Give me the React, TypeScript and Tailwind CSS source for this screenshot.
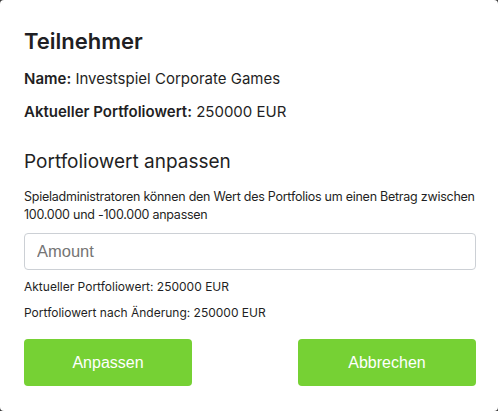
import React, { useState } from 'react';

const App: React.FC = () => {
  const [amount, setAmount] = useState('');
  const current = 250000;
  const delta = Number(amount) || 0;

  return (
    <div className="w-[498px] h-[411px] bg-[#3a3a3a]">
      <div className="w-full h-full bg-white rounded-[4px] pl-6 pr-[22px] pt-[26px] text-[#1f1f24] font-['Inter',sans-serif]">
        <h2 className="text-[22px] font-semibold leading-[30px]">Teilnehmer</h2>
        <p className="mt-[13px] text-[15px] leading-[20px]">
          <span className="font-semibold">Name:</span> Investspiel Corporate Games
        </p>
        <p className="mt-[13px] text-[15px] leading-[20px]">
          <span className="font-semibold">Aktueller Portfoliowert:</span> {current} EUR
        </p>

        <h3 className="mt-[27px] text-[19px] leading-[26px]">Portfoliowert anpassen</h3>
        <p className="mt-[13px] text-[12.5px] leading-[18px] tracking-[-0.25px]">
          Spieladministratoren können den Wert des Portfolios um einen Betrag zwischen 100.000 und -100.000 anpassen
        </p>

        <input
          type="text"
          placeholder="Amount"
          value={amount}
          onChange={(e) => setAmount(e.target.value)}
          className="mt-[9px] w-full h-[37px] border border-[#ccd0d5] rounded-[4px] px-3 text-[16.5px] font-['Liberation_Sans',Arial,sans-serif] placeholder:text-[#757575] outline-none"
        />

        <p className="mt-[9px] text-[12px] leading-[16px]">Aktueller Portfoliowert: {current} EUR</p>
        <p className="mt-[10px] text-[12px] leading-[16px]">Portfoliowert nach Änderung: {current + delta} EUR</p>

        <div className="mt-[18px] flex justify-between">
          <button className="w-[168px] h-[47px] rounded-[4px] bg-[#76d134] text-white text-[16px] font-['Liberation_Sans',Arial,sans-serif]">
            Anpassen
          </button>
          <button className="w-[178px] h-[47px] rounded-[4px] bg-[#76d134] text-white text-[16px] font-['Liberation_Sans',Arial,sans-serif]">
            Abbrechen
          </button>
        </div>
      </div>
    </div>
  );
};

export default App;
